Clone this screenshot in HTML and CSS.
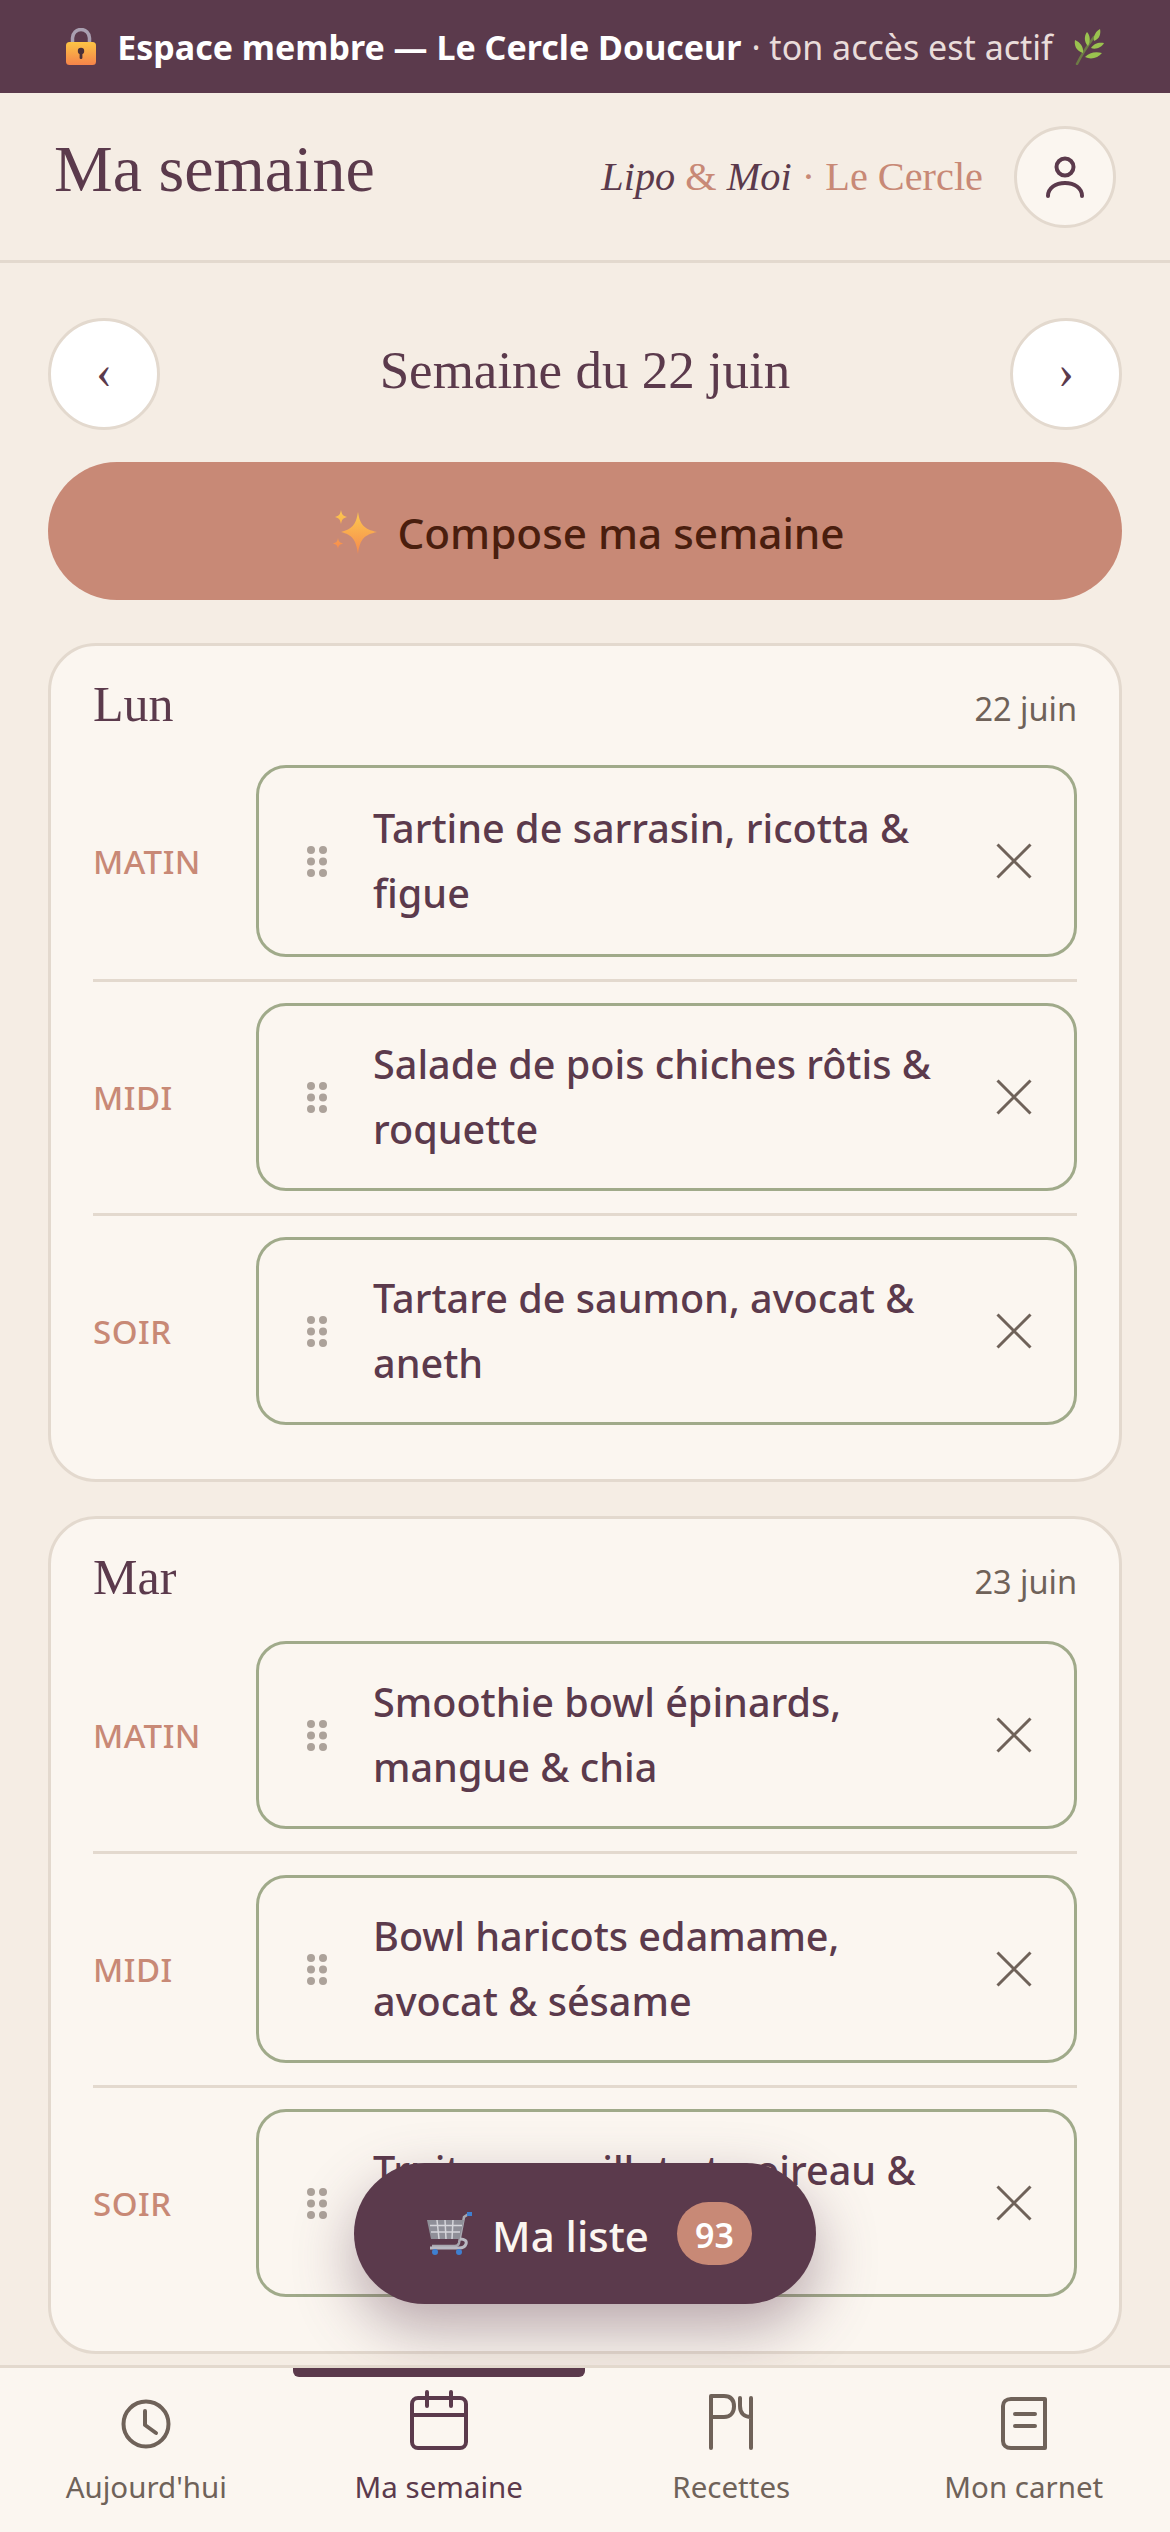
FILE: index.html
```html
<!DOCTYPE html>
<html lang="fr">
<head>
<meta charset="UTF-8">
<title>Ma semaine</title>
<link rel="stylesheet" href="styles.css">
</head>
<body>
<svg class="defs" width="0" height="0">
    <symbol id="dots" viewBox="0 0 20 31">
        <circle cx="4" cy="4" r="4"/><circle cx="16" cy="4" r="4"/>
        <circle cx="4" cy="15.5" r="4"/><circle cx="16" cy="15.5" r="4"/>
        <circle cx="4" cy="27" r="4"/><circle cx="16" cy="27" r="4"/>
    </symbol>
    <symbol id="cross" viewBox="0 0 36 36">
        <path d="M1.5 1.5 34.500 34.500M34.500 1.500 1.500 34.500" fill="none" stroke="currentColor" stroke-width="3"/>
    </symbol>
</svg>

<div class="banner">
    <svg class="emoji" width="32" height="38" viewBox="0 0 32 38">
        <defs><linearGradient id="lockfill" x1="0" y1="0" x2="0" y2="1"><stop offset="0" stop-color="#fcc545"/><stop offset="1" stop-color="#f5834a"/></linearGradient></defs>
        <path d="M7.500 17V10a8.500 8.500 0 0 1 17 0v7" fill="none" stroke="#a99fb0" stroke-width="3.500"/>
        <rect x="1" y="14" width="30" height="23" rx="3.500" fill="url(#lockfill)"/>
        <circle cx="16" cy="23" r="3.200" fill="#4a3038"/><rect x="14.600" y="24" width="2.800" height="7" rx="1.200" fill="#4a3038"/>
    </svg>
    <b>Espace membre — Le Cercle Douceur</b><span class="banner-dim">· ton accès est actif</span>
    <svg class="emoji" width="32" height="36" viewBox="0 0 32 36">
        <path d="M4 35C9 25 15 16 21 8" fill="none" stroke="#6d7a45" stroke-width="2.500" stroke-linecap="round"/>
        <path d="M10 24C3 22 1 16 2 11c5 2 9 7 8 13ZM15 17C11 13 11 7 14 3c3 3 4 9 1 14ZM21 12C20 7 23 2 27 0c1 4 0 10-6 12ZM18 19c3-5 8-6 13-5-2 4-8 7-13 5ZM12 28c4-4 10-6 17-4-4 5-11 7-17 4Z" fill="#9ac24f"/>
    </svg>
</div>

<header class="topbar">
    <h1 class="page-title">Ma semaine</h1>
    <div class="brand"><i>Lipo</i> <span class="rose">&amp;</span> <i>Moi</i> <span class="rose">· Le Cercle</span></div>
    <div class="avatar">
        <svg width="40" height="42" viewBox="0 0 40 42" fill="none" stroke="#5b3a4c" stroke-width="4" stroke-linecap="round">
            <circle cx="20" cy="11" r="8.500"/><path d="M3 40c0-8 7.500-13 17-13s17 5 17 13"/>
        </svg>
    </div>
</header>

<main class="content">
    <div class="week-nav">
        <div class="round-btn">‹</div>
        <div class="week-title">Semaine du 22 juin</div>
        <div class="round-btn">›</div>
    </div>

    <div class="compose">
        <svg class="emoji" width="48" height="46" viewBox="0 0 48 46">
            <defs><linearGradient id="spark" x1="0" y1="0" x2="0" y2="1"><stop offset="0" stop-color="#fdc94f"/><stop offset="1" stop-color="#f68a4d"/></linearGradient></defs>
            <path d="M27 3c2 13 6 17 19 20-13 3-17 7-19 22-2-15-6-19-17-22 11-3 15-7 17-20Z" fill="url(#spark)"/>
            <path d="M10 1c.8 4.500 2 6 6 7-4 1-5.200 2.500-6 7-.8-4.500-2-6-6-7 4-1 5.200-2.500 6-7ZM7 29c.6 3.500 1.500 4.500 5 5.500-3.500 1-4.400 2-5 5.500-.6-3.500-1.500-4.500-5-5.500 3.500-1 4.400-2 5-5.500Z" fill="url(#spark)"/>
        </svg>
        <span>Compose ma semaine</span>
    </div>

    <section class="day">
        <div class="day-head"><span class="day-name">Lun</span><span class="day-date">22 juin</span></div>
        <div class="meal meal-raised">
            <span class="meal-label">MATIN</span>
            <div class="slot">
                <svg class="grip"><use href="#dots"/></svg>
                <span class="slot-text">Tartine de sarrasin, ricotta &amp; figue</span>
                <svg class="remove"><use href="#cross"/></svg>
            </div>
        </div>
        <div class="meal">
            <span class="meal-label">MIDI</span>
            <div class="slot">
                <svg class="grip"><use href="#dots"/></svg>
                <span class="slot-text">Salade de pois chiches rôtis &amp; roquette</span>
                <svg class="remove"><use href="#cross"/></svg>
            </div>
        </div>
        <div class="meal">
            <span class="meal-label">SOIR</span>
            <div class="slot">
                <svg class="grip"><use href="#dots"/></svg>
                <span class="slot-text">Tartare de saumon, avocat &amp; aneth</span>
                <svg class="remove"><use href="#cross"/></svg>
            </div>
        </div>
    </section>

    <section class="day">
        <div class="day-head"><span class="day-name">Mar</span><span class="day-date">23 juin</span></div>
        <div class="meal">
            <span class="meal-label">MATIN</span>
            <div class="slot">
                <svg class="grip"><use href="#dots"/></svg>
                <span class="slot-text">Smoothie bowl épinards, mangue &amp; chia</span>
                <svg class="remove"><use href="#cross"/></svg>
            </div>
        </div>
        <div class="meal">
            <span class="meal-label">MIDI</span>
            <div class="slot">
                <svg class="grip"><use href="#dots"/></svg>
                <span class="slot-text">Bowl haricots edamame, avocat &amp; sésame</span>
                <svg class="remove"><use href="#cross"/></svg>
            </div>
        </div>
        <div class="meal">
            <span class="meal-label">SOIR</span>
            <div class="slot">
                <svg class="grip"><use href="#dots"/></svg>
                <span class="slot-text">Truite sur millet et poireau &amp; aneth</span>
                <svg class="remove"><use href="#cross"/></svg>
            </div>
        </div>
    </section>
</main>

<div class="fab">
    <svg class="emoji" width="46" height="44" viewBox="0 0 46 44">
        <path d="M44 1 38 5 33 31c-.5 2-2 3-4 3H6" fill="none" stroke="#a8a8b0" stroke-width="2.500"/>
        <path d="M1 8h37l-4.500 19H5Z" fill="#8f8f98"/>
        <path d="M4 13.500h32M5 20h29M11 8l2 19M19 8l1 19M27 8l-1 19" fill="none" stroke="#d5d5da" stroke-width="1.500"/>
        <path d="M34 27c5 0 7 2 6 5s-3 4-7 4H4" fill="none" stroke="#b9b9c2" stroke-width="3"/>
        <circle cx="9" cy="40" r="3" fill="#3f7fd0"/><circle cx="33" cy="40" r="3" fill="#3f7fd0"/>
        <rect x="41" y="0" width="5" height="4" fill="#3f7fd0"/>
    </svg>
    <span class="fab-label">Ma liste</span>
    <span class="fab-count">93</span>
</div>

<nav class="tabs">
    <div class="tab">
        <svg width="52" height="60" viewBox="0 0 52 60" fill="none" stroke="#6f6259" stroke-width="4" stroke-linecap="round" stroke-linejoin="round">
            <circle cx="26" cy="34" r="22.500"/><path d="M25 21v14l11 8"/>
        </svg>
        Aujourd'hui
    </div>
    <div class="tab tab-active">
        <svg width="58" height="60" viewBox="0 0 58 60" fill="none" stroke="#5b3a4c" stroke-width="4" stroke-linecap="round" stroke-linejoin="round">
            <rect x="2" y="8" width="54" height="50" rx="6"/><path d="M2 25h54M17 2v14M41 2v14"/>
        </svg>
        Ma semaine
    </div>
    <div class="tab">
        <svg width="46" height="60" viewBox="0 0 46 60" fill="none" stroke="#6f6259" stroke-width="4" stroke-linecap="round" stroke-linejoin="round">
            <path d="M3 58V6h13c8 0 10 5 10 10.500S23 27 16 27H3M32 8v8c0 7 4 11 11 11M43 8v50"/>
        </svg>
        Recettes
    </div>
    <div class="tab">
        <svg width="46" height="60" viewBox="0 0 46 60" fill="none" stroke="#6f6259" stroke-width="4" stroke-linecap="round" stroke-linejoin="round">
            <path d="M44 9H10c-5 0-8 3-8 7v35c0 4 3 7 8 7h34ZM14 24h20M14 36h20"/>
        </svg>
        Mon carnet
    </div>
</nav>
</body>
</html>
```

FILE: styles.css
```css
* {
    box-sizing: border-box;
}
html, body {
    height: 100%;
}
body {
    margin: 0;
    height: 2532px;
    overflow: hidden;
    position: relative;
    display: flex;
    flex-direction: column;
    background: #f5ede4;
    color: #5b3a4c;
    font-family: "Noto Sans", sans-serif;
}
.defs {
    position: absolute;
}
.emoji {
    flex: none;
}
.banner {
    height: 93px;
    flex: none;
    display: flex;
    align-items: center;
    justify-content: center;
    gap: 20px;
    background: #5b3a4c;
    color: #fff;
    font-size: 34px;
}
.banner b {
    font-weight: 700;
}
.banner-dim {
    color: #e9dcda;
    margin-left: -10px;
}
.topbar {
    height: 170px;
    flex: none;
    display: flex;
    align-items: center;
    padding: 0 54px 0;
    border-bottom: 3px solid #e3d9ce;
}
.page-title {
    margin: -16px auto 0 0;
    font-family: "Liberation Serif", serif;
    font-weight: 400;
    font-size: 66px;
}
.brand {
    font-family: "Liberation Serif", serif;
    font-size: 40.300px;
    margin-right: 31px;
}
.rose {
    color: #c88976;
}
.avatar {
    width: 102px;
    height: 102px;
    display: flex;
    align-items: center;
    justify-content: center;
    border-radius: 50%;
    border: 3px solid #e3d9ce;
    background: #fbf6f0;
}
.content {
    flex: 1;
    min-height: 0;
    overflow: hidden;
    padding: 55px 48px 0;
}
.week-nav {
    display: flex;
    align-items: center;
    justify-content: space-between;
}
.round-btn {
    width: 112px;
    height: 112px;
    display: flex;
    align-items: center;
    justify-content: center;
    border-radius: 50%;
    border: 3px solid #e3d9ce;
    background: #fff;
    font-family: "Liberation Serif", serif;
    font-size: 48px;
    padding-bottom: 6px;
}
.week-title {
    font-family: "Liberation Serif", serif;
    font-size: 53px;
    margin-top: -8px;
}
.compose {
    height: 138px;
    margin-top: 32px;
    padding: 2px 0 0 6px;
    display: flex;
    align-items: center;
    justify-content: center;
    gap: 18px;
    border-radius: 69px;
    background: #c88976;
    color: #4a1e0e;
    font-size: 42.300px;
    font-weight: 500;
}
.day {
    margin-top: 43px;
    padding: 30px 42px 32px;
    border: 3px solid #e3d9ce;
    border-radius: 48px;
    background: #fbf6f0;
}
.day + .day {
    margin-top: 34.500px;
}
.day-head {
    height: 71.500px;
    margin-top: -1px;
    display: flex;
    justify-content: space-between;
    align-items: baseline;
}
.day-name {
    font-family: "Liberation Serif", serif;
    font-size: 50px;
}
.day-date {
    font-size: 32.500px;
    color: #6f6259;
}
.meal {
    display: flex;
    align-items: center;
    padding: 21.500px 0;
    border-bottom: 3px solid #e3d9ce;
}
.meal:last-child {
    border-bottom: 0;
}
.meal-label {
    width: 163px;
    flex: none;
    color: #c88976;
    font-size: 33px;
    font-weight: 500;
    letter-spacing: 0.5px;
}
.slot {
    flex: 1;
    height: 188px;
    display: flex;
    align-items: center;
    padding: 0 42px 0 48px;
    border: 3px solid #a0aa8a;
    border-radius: 30px;
    background: #fbf6f0;
}
/* the first slot of the week sits a little higher and taller */
.meal-raised {
    padding-top: 22.500px;
}
.meal-raised .meal-label {
    margin-top: -4px;
}
.meal-raised .slot {
    height: 192px;
    margin-top: -4px;
}
.grip {
    width: 20px;
    height: 31px;
    flex: none;
    fill: #aca29a;
    margin-right: 46px;
}
.slot-text {
    flex: 1;
    margin-right: 42px;
    font-size: 39.600px;
    font-weight: 500;
    line-height: 64.600px;
}
.remove {
    width: 36px;
    height: 36px;
    flex: none;
    color: #6f6259;
}
.fab {
    position: absolute;
    left: 354px;
    top: 2163px;
    width: 462px;
    height: 141px;
    padding-left: 8px;
    display: flex;
    align-items: center;
    justify-content: center;
    gap: 20px;
    border-radius: 71px;
    background: #5b3a4c;
    color: #fbf6f0;
    font-size: 42px;
    font-weight: 500;
    box-shadow: 0 24px 60px rgba(91, 58, 76, 0.42);
}
.fab-label {
    padding-top: 3px;
}
.fab-count {
    min-width: 75px;
    height: 63px;
    margin-left: 8px;
    padding-top: 2px;
    display: flex;
    align-items: center;
    justify-content: center;
    border-radius: 32px;
    background: #c88976;
    color: #fff;
    font-size: 34px;
    font-weight: 600;
}
.tabs {
    position: absolute;
    left: 0;
    right: 0;
    bottom: 0;
    height: 167px;
    display: grid;
    grid-template-columns: repeat(4, 1fr);
    border-top: 3px solid #e3d9ce;
    background: #fbf6f0;
}
.tab {
    position: relative;
    display: flex;
    flex-direction: column;
    align-items: center;
    gap: 16px;
    padding-top: 22px;
    color: #6f6259;
    font-size: 29.500px;
}
.tab-active {
    color: #5b3a4c;
}
.tab-active::before {
    content: "";
    position: absolute;
    top: 0;
    left: 0;
    right: 0;
    height: 9px;
    border-radius: 0 0 6px 6px;
    background: #5b3a4c;
}
```
